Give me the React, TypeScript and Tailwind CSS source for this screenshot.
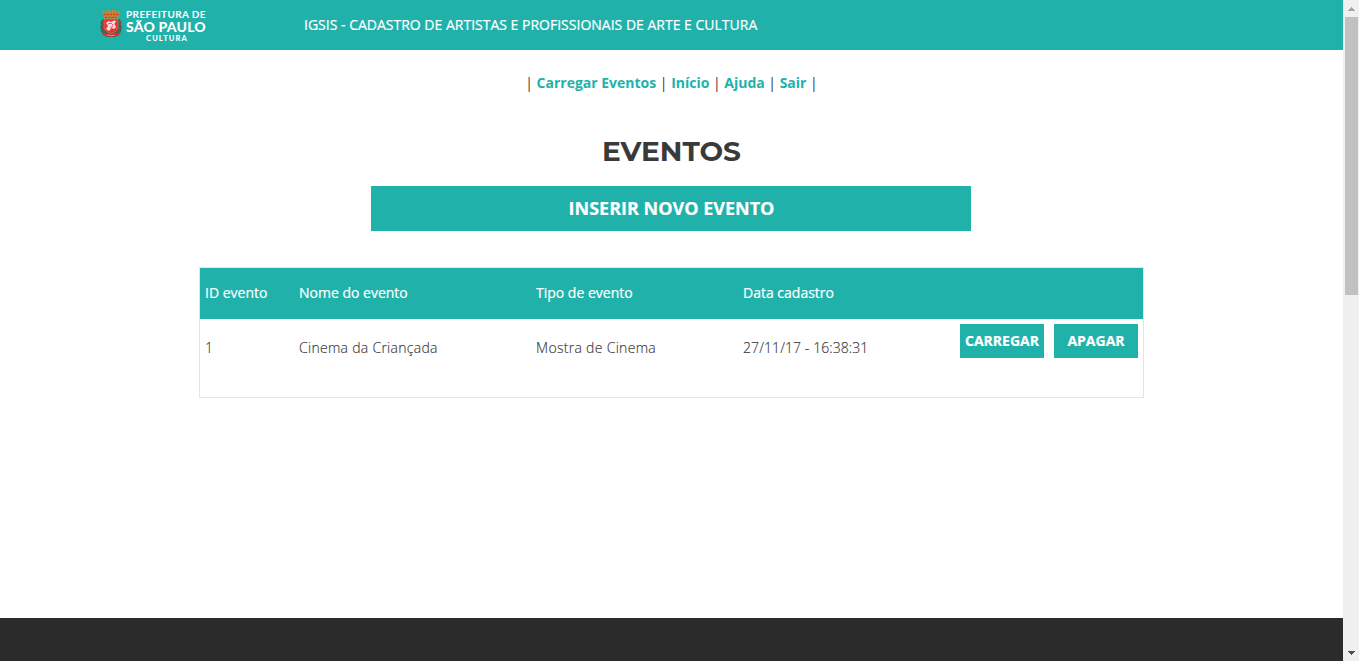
import React from "react";

function Crest() {
  return (
    <svg className="h-[29px] w-[22px] shrink-0" viewBox="0 0 22 29" aria-hidden="true">
      <path d="M2.5 9 L0.5 12 L1 15 L0 17 L1 20 L1 22 L4 25 L7 27 H15 L18 25 L21 22 L21 20 L22 17 L21 15 L21.5 12 L19.5 9Z" fill="#3c6647" />
      <path d="M2 11 L1.8 17 L3.5 23 M20 11 L20.2 17 L18.5 23" fill="none" stroke="#c03a3a" strokeWidth="1.6" strokeDasharray="1.4 2" />
      <path d="M2 1 H5 V2 H7 V0 H10 V2 H12 V0 H15 V2 H17 V1 H20 L18 8.5 H4Z" fill="#c08a34" />
      <path d="M3.5 4.5 H18.5 M5 7.5 H17" stroke="#cc3a2c" strokeWidth="1.3" strokeDasharray="2 1.2" />
      <path d="M4 9 H18 V18 Q17 22 11 23.5 Q5 22 4 18Z" fill="#e8303a" stroke="#ee8580" strokeWidth=".5" />
      <path d="M6 13 L8.5 11 L11 12 L14 10.5 L16 11 L14.5 14 L16 17 L14.5 19 L11.5 18 L9 21 L6 19 L8 16Z" fill="#f9dcd8" />
      <path d="M8 14 L11 13 L13 15 M10 18 L13 16" fill="none" stroke="#dc5960" strokeWidth="1" />
      <path d="M2 22 L6 23.5 Q11 25.5 16 23.5 L20 22 L18.5 26 L15 25.5 Q11 28 7 25.5 L3.5 26Z" fill="#e02c36" />
      <path d="M7 25 Q11 26.5 15 25" fill="none" stroke="#f4b6b1" strokeWidth=".7" />
    </svg>
  );
}

function Logo() {
  return (
    <div className="flex h-[50px] w-[204px] shrink-0 pt-[9px]">
      <div className="pt-px"><Crest /></div>
      <div className="ml-[4px] w-[82px] whitespace-nowrap font-['Lato',sans-serif] text-white">
        <div className="h-[11px] text-[10px] font-bold leading-[11px] tracking-[0.38px]">PREFEITURA DE</div>
        <div className="h-[14px] text-[14px] font-black leading-[14px] tracking-[0.2px]">SÃO PAULO</div>
        <div className="h-[10px] text-center text-[7.5px] font-black leading-[10px] tracking-[1.1px]">CULTURA</div>
      </div>
    </div>
  );
}

const links = ["Carregar Eventos", "Início", "Ajuda", "Sair"];
const headings = ["ID evento", "Nome do evento", "Tipo de evento", "Data cadastro"];
const cells = [
  { text: "1", tracking: "tracking-normal" },
  { text: "Cinema da Criançada", tracking: "tracking-[0.28px]" },
  { text: "Mostra de Cinema", tracking: "tracking-[0.3px]" },
  { text: "27/11/17 - 16:38:31", tracking: "tracking-[0.08px]" },
];

export default function App() {
  return (
    <div className="flex h-[661px] w-full overflow-hidden bg-white font-['Open_Sans',sans-serif] text-[14px] text-[#3a3a3a]">
      <div className="flex w-[1343px] shrink-0 flex-col">
        <header className="flex h-[50px] shrink-0 bg-[#20b2aa] pl-[100px] text-white">
          <Logo />
          <p className="whitespace-nowrap text-[14px] leading-[50px] [-webkit-text-stroke:0.2px_white]">
            IGSIS - CADASTRO DE ARTISTAS E PROFISSIONAIS DE ARTE E CULTURA
          </p>
        </header>

        <main className="flex flex-1 flex-col items-center">
          <nav className="mt-[23px] flex h-[20px] gap-[3.6px] font-bold leading-[20px] text-[#20b2aa]">
            <span className="font-normal text-[#3a3a3a]">|</span>
            {links.map((link) => (
              <React.Fragment key={link}>
                <a href="#">{link}</a>
                <span className="font-normal text-[#3a3a3a]">|</span>
              </React.Fragment>
            ))}
          </nav>
          <h1 className="mt-[42px] h-[32px] font-['Montserrat','Inter',sans-serif] text-[28px] font-bold leading-[32px]">EVENTOS</h1>
          <button className="mr-px mt-[19px] h-[45px] w-[600px] bg-[#20b2aa] pl-px text-[18px] font-bold text-white [-webkit-text-stroke:0.2px_white]">INSERIR NOVO EVENTO</button>

          <table className="mt-[36px] h-[131px] w-[945px] table-fixed border-separate border-spacing-0 border border-[#e6e6e1]">
            <colgroup>
              <col className="w-[94px]" /><col className="w-[237px]" /><col className="w-[207px]" />
              <col className="w-[217px]" /><col className="w-[94px]" /><col className="w-[94px]" />
            </colgroup>
            <thead>
              <tr className="h-[51px] bg-[#20b2aa] text-left text-white [-webkit-text-stroke:0.2px_white]">
                {headings.map((heading) => <th className="px-[5px] pb-[2px] pt-0 font-normal" key={heading}>{heading}</th>)}
                <th /><th />
              </tr>
            </thead>
            <tbody>
              <tr className="h-[78px] align-top">
                {cells.map(({ text, tracking }) => (
                  <td className={`whitespace-nowrap px-[5px] pt-[19px] font-light leading-[20px] [-webkit-text-stroke:0.15px_#3a3a3a] ${tracking}`} key={text}>{text}</td>
                ))}
                {["CARREGAR", "APAGAR"].map((label) => (
                  <td className="p-[5px]" key={label}>
                    <button className="block h-[34px] w-[84px] bg-[#20b2aa] pb-[2px] text-[14px] font-bold text-white [-webkit-text-stroke:0.2px_white]">{label}</button>
                  </td>
                ))}
              </tr>
            </tbody>
          </table>
        </main>
        <footer className="h-[43px] shrink-0 bg-[#2b2b2b]" />
      </div>

      <div className="flex w-[16px] shrink-0 flex-col items-center bg-[#f0f0f0]">
        <svg className="h-[17px] w-[16px] shrink-0" viewBox="0 0 16 17" shapeRendering="crispEdges"><path d="M5 11 L8 7 L9 7 L12 11Z" fill="#a3a3a3" /></svg>
        <div className="ml-px h-[278px] w-[13px] bg-[#c1c1c1]" />
        <svg className="mt-auto h-[17px] w-[16px] shrink-0" viewBox="0 0 16 17" shapeRendering="crispEdges"><path d="M5 7 H12 L9 11 H8Z" fill="#505050" /></svg>
      </div>
    </div>
  );
}
